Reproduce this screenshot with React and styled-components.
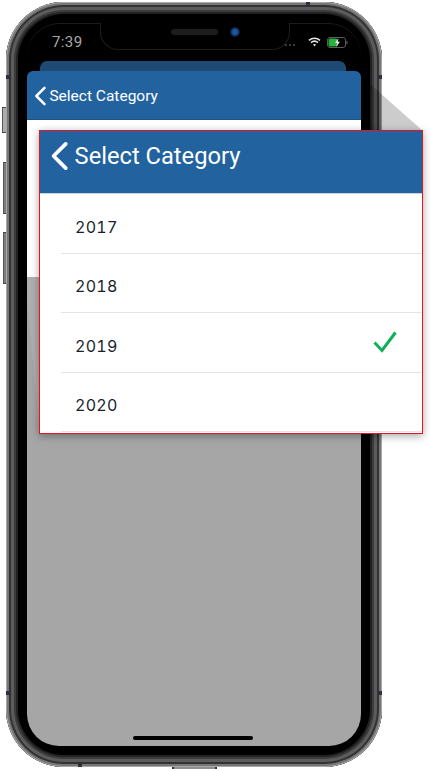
import React from "react";
import styled, { createGlobalStyle } from "styled-components";

const GlobalStyle = createGlobalStyle`
  html, body {
    margin: 0;
    padding: 0;
    background: #fff;
  }
  body {
    font-family: "Roboto", "Liberation Sans", sans-serif;
  }
`;

const Page = styled.div`
  position: relative;
  width: 430px;
  height: 771px;
  overflow: hidden;
  background: #fff;
  padding: 2px 0 0 6px;
  box-sizing: border-box;
`;

const SideButton = styled.div`
  position: absolute;
  left: ${(props) => (props.$light ? 2 : 3)}px;
  top: ${(props) => props.$top}px;
  width: ${(props) => (props.$light ? 4 : 3)}px;
  height: ${(props) => props.$height}px;
  box-sizing: border-box;
  border-left: 1px solid #555;
  border-top: 1px solid #444;
  border-bottom: 1px solid #444;
  background: ${(props) => (props.$light ? "#adadad" : "#7d7d7d")};
`;

const BottomNub = styled.div`
  position: absolute;
  left: 172px;
  top: 767px;
  width: 45px;
  height: 2px;
  box-sizing: border-box;
  border-left: 2px solid #333;
  border-right: 2px solid #333;
  background: #8f8f8f;
`;

const AntennaDot = styled.div`
  position: absolute;
  left: ${(props) => props.$x}px;
  top: ${(props) => props.$y}px;
  width: 4px;
  height: 4px;
  background: #2d3038;
`;

const Frame = styled.div`
  width: 376px;
  height: 765px;
  box-sizing: border-box;
  padding: 12px;
  border-radius: 58px;
  background: #222;
  box-shadow:
    inset 0 0 0 1px #a8a8a8,
    inset 0 0 0 3px #767676,
    inset 0 0 0 5px #333,
    inset 0 0 0 8px #5c5c5c,
    inset 0 0 0 10px #3c3c3c;
`;

const BlackRim = styled.div`
  height: 100%;
  box-sizing: border-box;
  padding: 9px;
  border-radius: 46px;
  background: #000;
`;

const Screen = styled.div`
  position: relative;
  display: flex;
  flex-direction: column;
  height: 100%;
  border-radius: 32px;
  overflow: hidden;
  background: #000;
`;

const StatusBar = styled.div`
  flex: none;
  display: flex;
  align-items: center;
  justify-content: space-between;
  height: 38px;
  padding: 0 13px 0 25px;
  box-sizing: border-box;
  border-radius: 32px 32px 0 0;
  box-shadow: inset 0 1px 0 #1c1c1c;
`;

const Time = styled.span`
  font-size: 15px;
  color: #a9a9a9;
  letter-spacing: 0.4px;
`;

const StatusIcons = styled.div`
  display: flex;
  align-items: center;
  gap: 6px;
`;

const SignalDots = styled.div`
  display: flex;
  gap: 2px;
  margin: 5px 7px 0 0;
`;

const SignalDot = styled.span`
  width: 2px;
  height: 2px;
  background: #3c3c3c;
`;

const Notch = styled.div`
  position: absolute;
  top: -1px;
  left: 73px;
  width: 190px;
  height: 28px;
  box-sizing: border-box;
  background: #000;
  border: 1px solid #1c1c1c;
  border-top: none;
  border-radius: 0 0 18px 18px;
`;

const Speaker = styled.div`
  position: absolute;
  left: 70px;
  top: 7px;
  width: 47px;
  height: 6px;
  border-radius: 3px;
  background: #1d1d1d;
`;

const Camera = styled.div`
  position: absolute;
  left: 129px;
  top: 5px;
  width: 10px;
  height: 10px;
  border-radius: 50%;
  background: radial-gradient(circle, #1a56a8 30%, #0c1626 70%);
`;

const BackCard = styled.div`
  flex: none;
  height: 10px;
  margin: 0 15px 0 13px;
  border-radius: 7px 7px 0 0;
  background: #1f4a73;
`;

const Header = styled.div`
  flex: none;
  display: flex;
  align-items: center;
  gap: 3px;
  height: 49px;
  padding: 2px 0 0 7px;
  box-sizing: border-box;
  border-radius: 6px 6px 0 0;
  border-bottom: 1px solid #1d5488;
  background: #22639f;
  color: #fff;
  font-size: 15.5px;
`;

const ScreenBody = styled.div`
  flex: none;
  height: 157px;
  background: #fff;
`;

const DimmedArea = styled.div`
  flex: 1;
  background: #a6a6a6;
`;

const Beam = styled.svg`
  position: absolute;
  left: 0;
  top: 0;
  pointer-events: none;
`;

const Callout = styled.div`
  position: absolute;
  left: 39px;
  top: 130px;
  width: 384px;
  height: 304px;
  box-sizing: border-box;
  border: 1px solid #e8131f;
  background: #fff;
  box-shadow: 0 2px 8px rgba(0, 0, 0, 0.35);
`;

const CalloutHeader = styled.div`
  display: flex;
  align-items: center;
  gap: 6px;
  height: 63px;
  padding: 0 0 12px 10px;
  box-sizing: border-box;
  border-bottom: 1px solid #c8d3de;
  background: #22639f;
  color: #fff;
  font-size: 23.7px;
`;

const Row = styled.div`
  display: flex;
  align-items: center;
  justify-content: space-between;
  height: 59.5px;
  margin-left: 21px;
  padding: 0 25px 0 14px;
  box-sizing: border-box;
  border-bottom: 1px solid #e4e4e4;
`;

const RowLabel = styled.span`
  margin-top: 7px;
  font-family: "Inter", "Liberation Sans", sans-serif;
  font-size: 16px;
  font-weight: 400;
  font-feature-settings: "tnum";
  letter-spacing: 0.3px;
  color: #1a1f2b;
`;

const HomeBar = styled.div`
  position: absolute;
  left: 106px;
  bottom: 6px;
  width: 120px;
  height: 4px;
  border-radius: 2px;
  background: #000;
`;

const Chevron = ({ size }) => (
  <svg width={size * 0.62} height={size} viewBox="0 0 13 21" fill="none">
    <path d="M11 2 L2.5 10.5 L11 19" stroke="#fff" strokeWidth="2.6" strokeLinecap="round" strokeLinejoin="round" />
  </svg>
);

const Wifi = () => (
  <svg width="13" height="10" viewBox="0 0 13 10" fill="none">
    <path d="M1 3.4 C4 0.6 9 0.6 12 3.4" stroke="#e4e4e4" strokeWidth="1.5" />
    <path d="M3 5.6 C5 3.9 8 3.9 10 5.6" stroke="#e4e4e4" strokeWidth="1.5" />
    <path d="M5 7.6 L6.5 9.4 L8 7.6 C7 6.9 6 6.9 5 7.6 Z" fill="#e4e4e4" />
  </svg>
);

const Battery = () => (
  <svg width="21" height="11" viewBox="0 0 21 11" fill="none">
    <rect x="0.5" y="0.5" width="18" height="10" rx="2.5" stroke="#5c5c5c" />
    <rect x="1.5" y="1.5" width="9" height="8" rx="1.5" fill="#27b23f" />
    <path d="M20 4 V7" stroke="#5c5c5c" strokeWidth="1.2" />
    <path d="M11.5 1 L8 6 H10.2 L9.2 10 L13 4.8 H10.8 Z" fill="#e8e8e8" />
  </svg>
);

const Check = () => (
  <svg width="24" height="22" viewBox="0 0 24 22" fill="none">
    <path d="M1.5 11.5 L9 19.5 L22.5 1.5" stroke="#0fae5b" strokeWidth="3" />
  </svg>
);

const years = ["2017", "2018", "2019", "2020"];
const antennaDots = [
  [6, 75],
  [378, 75],
  [306, 2],
  [6, 691],
  [378, 691],
  [78, 763],
];

export default function App() {
  return (
    <>
      <GlobalStyle />
      <Page>
        <SideButton $light $top={107} $height={26} />
        <SideButton $top={162} $height={52} />
        <SideButton $top={232} $height={52} />
        <BottomNub />
        <Frame>
          <BlackRim>
            <Screen>
              <StatusBar>
                <Time>7:39</Time>
                <StatusIcons>
                  <SignalDots>
                    <SignalDot />
                    <SignalDot />
                    <SignalDot />
                    <SignalDot />
                  </SignalDots>
                  <Wifi />
                  <Battery />
                </StatusIcons>
              </StatusBar>
              <Notch>
                <Speaker />
                <Camera />
              </Notch>
              <BackCard />
              <Header>
                <Chevron size={20} />
                Select Category
              </Header>
              <ScreenBody />
              <DimmedArea />
              <HomeBar />
            </Screen>
          </BlackRim>
        </Frame>
        {antennaDots.map(([x, y]) => (
          <AntennaDot key={`${x}-${y}`} $x={x} $y={y} />
        ))}
        <Beam width="430" height="771" viewBox="0 0 430 771">
          <polygon points="361,76 423,131 361,131" fill="rgba(0,0,0,0.2)" />
          <polygon points="27,277 40,277 40,433 27,300" fill="rgba(255,255,255,0.1)" />
        </Beam>
        <Callout>
          <CalloutHeader>
            <Chevron size={30} />
            Select Category
          </CalloutHeader>
          {years.map((year) => (
            <Row key={year}>
              <RowLabel>{year}</RowLabel>
              {year === "2019" && <Check />}
            </Row>
          ))}
        </Callout>
      </Page>
    </>
  );
}
